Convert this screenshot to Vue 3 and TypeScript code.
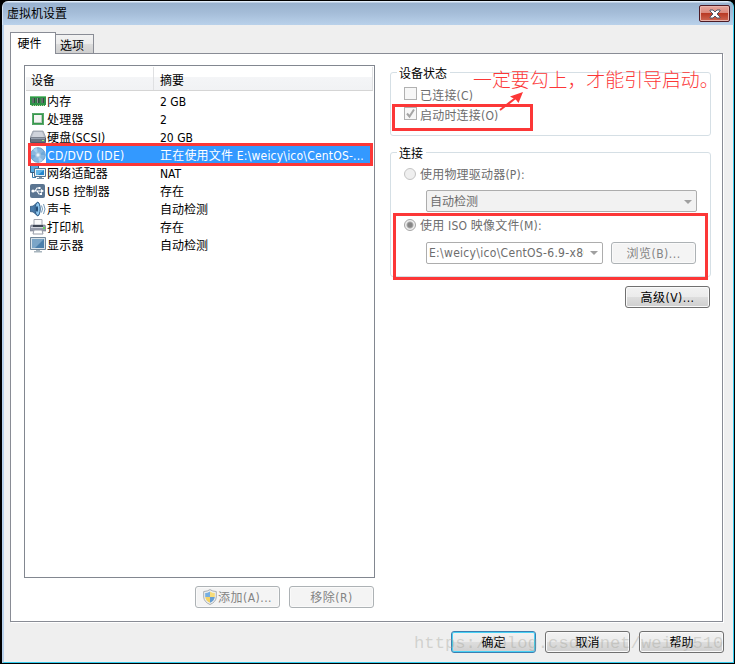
<script setup lang="ts">
import { ref } from 'vue'

interface Device {
  icon: string
  name: string
  summary: string
}

const devices: Device[] = [
  { icon: 'memory', name: '内存', summary: '2 GB' },
  { icon: 'cpu', name: '处理器', summary: '2' },
  { icon: 'disk', name: '硬盘(SCSI)', summary: '20 GB' },
  { icon: 'cd', name: 'CD/DVD (IDE)', summary: '正在使用文件 E:\\weicy\\ico\\CentOS-...' },
  { icon: 'network', name: '网络适配器', summary: 'NAT' },
  { icon: 'usb', name: 'USB 控制器', summary: '存在' },
  { icon: 'sound', name: '声卡', summary: '自动检测' },
  { icon: 'printer', name: '打印机', summary: '存在' },
  { icon: 'display', name: '显示器', summary: '自动检测' },
]

const selected = ref(3)
</script>

<template>
  <div class="window">
    <header class="titlebar">
      <h1>虚拟机设置</h1>
      <button class="close" aria-label="关闭">
        <svg width="12" height="10" viewBox="0 0 12 10">
          <path d="M1 1h3l2 2 2-2h3v1L8 5l3 3v1H8L6 7 4 9H1V8l3-3-3-3z" fill="#fff" stroke="#525866" stroke-width="1" />
        </svg>
      </button>
    </header>

    <div class="body">
      <nav class="tabs">
        <button class="tab active">硬件</button>
        <button class="tab">选项</button>
      </nav>

      <main class="panel">
        <section class="left">
          <div class="list">
            <div class="list-head">
              <span class="c-name">设备</span>
              <span class="c-sum">摘要</span>
            </div>
            <div
              v-for="(d, i) in devices"
              :key="d.name"
              class="row"
              :class="{ sel: i === selected }"
              @click="selected = i"
            >
              <svg class="icon" width="16" height="16" viewBox="0 0 16 16">
                <g v-if="d.icon === 'memory'">
                  <path d="M0 3h16v9h-1v1H1v-1H0z" fill="#2f9448" />
                  <path d="M0 3.5h16" stroke="#71c47e" />
                  <path d="M2 5h3v5H2zM6.5 5h3v5h-3zM11 5h3v5h-3z" fill="#344b43" />
                  <path d="M3 5v5M7.5 5v5M12 5v5" stroke="#8b9d90" />
                  <path d="M1 12.5h14" stroke="#b9d8a1" stroke-dasharray="1 1" />
                </g>
                <g v-else-if="d.icon === 'cpu'">
                  <path d="M2 2h12v12H2z" fill="#36984d" />
                  <path d="M2.5 2.5h11v11h-11z" fill="none" stroke="#5aa86a" />
                  <path d="M4 4h8v8H4z" fill="#f3f4f2" />
                  <path d="M11.5 4v8M4 11.5h8" stroke="#bfcac0" />
                </g>
                <g v-else-if="d.icon === 'disk'">
                  <path d="M3 2h10l3 7H0z" fill="#b8bec8" stroke="#8b929e" stroke-width=".7" />
                  <path d="M4 3h8l2 5H2z" fill="#d0d4dc" />
                  <path d="M.5 9h15v4.5H.5z" fill="#6b7482" stroke="#505967" />
                  <path d="M1 9.5h14" stroke="#98a2b0" />
                  <path d="M12 11h2v1h-2z" fill="#8df06c" />
                </g>
                <g v-else-if="d.icon === 'cd'">
                  <circle cx="8" cy="8" r="7.3" fill="#86b7e0" stroke="#6f9fca" />
                  <path d="M8 8 3 2.5A7 7 0 0 1 7 1zM8 8l5 5.5A7 7 0 0 1 9 15z" fill="#a9cfee" />
                  <path d="M8 8 14 4a7 7 0 0 1 1 4zM8 8 2 12a7 7 0 0 1-1-4z" fill="#6fa8d8" />
                  <circle cx="8" cy="8" r="2.5" fill="#c9dff0" stroke="#9abfdd" />
                  <circle cx="8" cy="8" r="1" fill="#f4f9fc" />
                </g>
                <g v-else-if="d.icon === 'network'">
                  <path d="M.5 .5h8v7h-8z" fill="#57a9df" stroke="#315a80" />
                  <path d="M2.500 8v4.500H6" stroke="#397bab" fill="none" />
                  <path d="M4.5 3.5h11v8h-11z" fill="#e8f1f6" stroke="#54718c" />
                  <path d="M6 5h8v5H6z" fill="#2385cc" />
                  <path d="M6 5h8L8 10H6z" fill="#61b5e8" />
                  <path d="M9 12h3v1h2v1H7v-1h2z" fill="#7690a5" />
                </g>
                <g v-else-if="d.icon === 'usb'">
                  <rect x="0" y="1" width="15" height="14" rx="2" fill="#5b7591" />
                  <path d="M3 8h9M5 8l2-3h2M7 8l2 3h2" fill="none" stroke="#fff" stroke-width="1.1" />
                  <circle cx="3" cy="8" r="1.6" fill="#fff" />
                  <path d="M11 6l3 2-3 2zM8.5 4h2v2h-2zM10 10h2v2h-2z" fill="#fff" />
                </g>
                <g v-else-if="d.icon === 'sound'">
                  <path d="M0 5.5 3 5l5-4c2 3 2 11 0 14l-5-4-3-.5z" fill="#4a7ba9" stroke="#315578" stroke-width=".7" />
                  <ellipse cx="7.7" cy="8" rx="2.5" ry="6.7" fill="#8cc5ed" stroke="#2c5984" />
                  <ellipse cx="7" cy="8" rx="1.1" ry="3" fill="#244c75" />
                  <path d="M11.5 4.5q2 3.5 0 7M13.5 3q3 5 0 10" fill="none" stroke="#7499b9" />
                </g>
                <g v-else-if="d.icon === 'printer'">
                  <path d="M4 .5h8v6H4z" fill="#fafafa" stroke="#a1a4ad" />
                  <path d="M1 6h14l1 2v4H0V8z" fill="#969cab" stroke="#777e8e" stroke-width=".6" />
                  <path d="M3 6h10v2H3z" fill="#3f4654" />
                  <path d="M1 8.5h14" stroke="#d2d5de" />
                  <path d="M4 11h8l1 4H3z" fill="#fff" stroke="#9499a5" />
                  <path d="M13 8h2v2h-2z" fill="#62d65b" />
                </g>
                <g v-else>
                  <path d="M.5 .5h15v12H.5z" fill="#d8e2e9" stroke="#71869a" />
                  <path d="M2 2h12v9H2z" fill="#4b7fac" />
                  <path d="M2 2h12L5 11H2z" fill="#7ba5c7" />
                  <path d="M6 13h4v1h2v1.5H4V14h2z" fill="#a8b5be" />
                </g>
              </svg>
              <div class="cells">
                <span class="name">{{ d.name }}</span>
                <span class="sum">{{ d.summary }}</span>
              </div>
            </div>
          </div>
          <div class="list-actions">
            <button class="btn disabled">
              <svg class="shield" width="14" height="16" viewBox="0 0 14 16">
                <path d="M7 .6Q9.500 2.500 13.300 2.500V8Q13 13 7 15.500Q1 13 .7 8V2.500Q4.500 2.500 7 .6z" fill="#eef0f0" stroke="#a8adb1" />
                <path d="M7 2.500Q4.500 4 2.200 4V8H7z" fill="#76aee0" />
                <path d="M7 2.500Q9.500 4 11.800 4V8H7z" fill="#f7dc78" />
                <path d="M2.200 8H7v5.800Q2.700 12 2.200 8z" fill="#f3d264" />
                <path d="M11.800 8H7v5.800Q11.300 12 11.800 8z" fill="#659dd3" />
              </svg>添加(A)...
            </button>
            <button class="btn disabled">移除(R)</button>
          </div>
        </section>

        <section class="right">
          <div class="group status">
            <h2>设备状态</h2>
            <label class="option"><span class="check"></span>已连接(C)</label>
            <label class="option"><span class="check">
              <svg width="11" height="11" viewBox="0 0 11 11"><path d="M2 5.500 4.500 8.500 9 1.500" fill="none" stroke="#a5a5a5" stroke-width="2" /></svg>
            </span>启动时连接(O)</label>
          </div>
          <div class="group connection">
            <h2>连接</h2>
            <label class="option"><span class="radio"></span>使用物理驱动器(P):</label>
            <div class="combo physical"><span>自动检测</span><i></i></div>
            <label class="option iso"><span class="radio on"></span>使用 ISO 映像文件(M):</label>
            <div class="file-row">
              <div class="combo file"><span>E:\weicy\ico\CentOS-6.9-x86</span><i></i></div>
              <button class="btn disabled">浏览(B)...</button>
            </div>
          </div>
          <button class="btn advanced">高级(V)...</button>
        </section>
      </main>

      <footer class="footer">
        <button class="btn primary">确定</button>
        <button class="btn">取消</button>
        <button class="btn">帮助</button>
      </footer>
    </div>

    <div class="mark mark-row"></div>
    <div class="mark mark-check"></div>
    <div class="mark mark-iso"></div>
    <svg class="arrow" width="28" height="22" viewBox="0 0 28 22">
      <path d="M2 20 17 8.500" stroke="#fc3737" stroke-width="2" />
      <path d="M25 2 20.500 13 18 9.800 12 6.500z" fill="#fc3737" />
    </svg>
    <p class="note">一定要勾上，才能引导启动。</p>
    <p class="watermark">https://blog.csdn.net/weicy510</p>
  </div>
</template>

<style>
body {
  margin: 0;
  background: #000;
  overflow: hidden;
}
</style>

<style scoped>
* {
  box-sizing: border-box;
}
.window {
  position: relative;
  display: flex;
  flex-direction: column;
  width: 735px;
  height: 664px;
  padding: 1px 1px 1px 2px;
  background: #000;
  border-radius: 7px 7px 0 0;
  font-family: 'DejaVu Sans Condensed', 'Noto Sans CJK SC', sans-serif;
  font-size: 12px;
  line-height: 18px;
  color: #000;
  overflow: hidden;
}
.titlebar {
  flex: none;
  display: flex;
  justify-content: space-between;
  height: 24px;
  padding: 4px 3px 0 4px;
  background: linear-gradient(#e1edfa 0, #e1edfa 1px, #99b2cf 2px, #a5bdd8 50%, #b9d1ea);
  border-left: 1px solid #d3e4f6;
  border-right: 1px solid #54d4ef;
  border-radius: 6px 6px 0 0;
}
h1,
h2,
p {
  margin: 0;
  font-size: 12px;
  font-weight: 400;
}
button {
  padding: 0;
  font: inherit;
  color: inherit;
}
.close {
  display: flex;
  align-items: center;
  justify-content: center;
  width: 31px;
  height: 17px;
  border: 1px solid #4d1b25;
  border-radius: 2px;
  background: linear-gradient(#e7a69d, #d98679 48%, #b93a24 50%, #cd6753);
  box-shadow: inset 0 0 0 1px #e9b4ac;
}
.body {
  flex: 1;
  display: flex;
  flex-direction: column;
  padding: 7px 10px 0 6px;
  background: #efefef;
  border: solid;
  border-width: 0 1px 1px 2px;
  border-color: #efefef #35cbed #35cbed #b9d1ea;
}
.tabs {
  flex: none;
  display: flex;
  align-items: flex-end;
  height: 21px;
}
.tab {
  width: 38px;
  height: 19px;
  padding: 2px 5px 0 0;
  border: 1px solid #898c95;
  border-left: 0;
  border-bottom: 0;
  background: linear-gradient(#f2f2f2, #ebebeb 50%, #dcdcdc 52%, #cfcfcf);
}
.tab.active {
  position: relative;
  z-index: 1;
  width: 46px;
  height: 22px;
  margin-bottom: -1px;
  padding: 0 7px 0 0;
  border-left: 1px solid #898c95;
  background: #fff;
}
.panel {
  flex: none;
  display: flex;
  gap: 15px;
  width: 713px;
  height: 569px;
  padding: 11px 11px 0 13px;
  border: 1px solid #898c95;
  background: #fff;
  box-shadow: 1px 1px 0 #fff;
}
.left {
  width: 351px;
}
.list {
  height: 513px;
  border: 1px solid #828790;
  padding: 1px;
}
.list-head {
  display: flex;
  height: 24px;
  margin-bottom: 1px;
  line-height: 28px;
  border-bottom: 1px solid #d5d5d5;
  background: linear-gradient(#fff 42%, #f4f5f7 43%, #f1f2f4);
}
.c-name {
  width: 128px;
  padding-left: 5px;
  border-right: 1px solid #dfe0e2;
}
.c-sum {
  flex: 1;
  padding-left: 6px;
  border-right: 1px solid #dfe0e2;
}
.row {
  display: flex;
  align-items: center;
  height: 18px;
  padding-left: 4px;
  white-space: nowrap;
}
.icon {
  flex: none;
}
.cells {
  display: flex;
  flex: 1;
  height: 18px;
  padding: 1px 0 0 1px;
}
.name {
  width: 113px;
  letter-spacing: 0.2px;
}
.row.sel .cells {
  background: #3399ff;
  color: #fff;
}
.row.sel .name {
  letter-spacing: 0.35px;
}
.row.sel .sum {
  letter-spacing: 0.2px;
}
.list-actions {
  display: flex;
  gap: 9px;
  justify-content: flex-end;
  padding: 8px 1px 0 0;
}
.btn {
  display: flex;
  align-items: center;
  justify-content: center;
  width: 85px;
  height: 22px;
  padding-top: 2px;
  border: 1px solid #707070;
  border-radius: 3px;
  background: linear-gradient(#f2f2f2, #ebebeb 50%, #dddddd 52%, #cfcfcf);
  box-shadow: inset 0 0 0 1px #fafafa;
  letter-spacing: 0.5px;
}
.btn.disabled {
  border-color: #adb2b5;
  background: #f4f4f4;
  color: #838383;
}
.shield {
  margin: -2px 1px 0 0;
}
.btn.primary {
  border-color: #3c7fb1;
  box-shadow: inset 0 0 0 1px #48d1f5;
}
.right {
  width: 321px;
  padding-top: 7px;
}
.group {
  border: 1px solid #d5dfe5;
  border-radius: 3px;
}
.group h2 {
  width: fit-content;
  height: 18px;
  margin: -8px 0 0 6px;
  padding: 0 3px 0 2px;
  background: #fff;
}
.status {
  height: 64px;
}
.option {
  display: flex;
  align-items: center;
  height: 20px;
  padding-left: 13px;
  color: #6d6d6d;
  letter-spacing: 0.2px;
}
.status .option {
  margin-top: 3px;
}
.status .option + .option {
  margin-top: 0;
}
.check {
  flex: none;
  width: 13px;
  height: 13px;
  margin: -5px 3px 0 0;
  border: 1px solid #b1b1b1;
  background: #f7f7f7;
}
.check svg {
  display: block;
}
.radio {
  flex: none;
  width: 12px;
  height: 12px;
  margin: -3px 4px 0 0;
  border: 1px solid #c4c4c4;
  border-radius: 50%;
  background: #efefef;
}
.radio.on {
  border-color: #a5a5a5;
  background: radial-gradient(circle, #858585 0 2px, #aaa 3px, #eee 4px);
}
.connection {
  height: 125px;
  margin-top: 16px;
}
.connection .option {
  margin-top: 2px;
}
.combo {
  display: flex;
  align-items: center;
  justify-content: space-between;
  height: 22px;
  padding: 2px 4px 0 3px;
  border: 1px solid #adadad;
  border-radius: 2px;
  background: #fff;
  color: #6d6d6d;
}
.combo span {
  overflow: hidden;
  white-space: nowrap;
}
.combo i {
  flex: none;
  border: solid transparent;
  border-width: 4px 4px 0;
  border-top-color: #a0a0a0;
}
.physical {
  width: 271px;
  margin: 5px 0 0 35px;
  background: #f2f2f2;
}
.connection .iso {
  margin-top: 4px;
}
.file-row {
  display: flex;
  gap: 8px;
  margin: 6px 0 0 35px;
}
.file {
  width: 177px;
  padding: 0 4px 0 2px;
}
.file span {
  width: 155px;
  letter-spacing: 0.3px;
}
.advanced {
  margin: 9px 1px 0 auto;
}
.footer {
  display: flex;
  gap: 9px;
  justify-content: flex-end;
  padding: 9px 0 0;
  margin-right: -1px;
}
.footer .btn {
  letter-spacing: 0;
}
.mark {
  position: absolute;
  border: 3px solid #fc3737;
  pointer-events: none;
}
.mark-row {
  left: 28px;
  top: 143px;
  width: 345px;
  height: 23px;
}
.mark-check {
  left: 392px;
  top: 104px;
  width: 141px;
  height: 27px;
}
.mark-iso {
  left: 393px;
  top: 213px;
  width: 315px;
  height: 67px;
}
.arrow {
  position: absolute;
  left: 498px;
  top: 90px;
}
.note {
  position: absolute;
  left: 473px;
  top: 66px;
  font-family: 'Noto Sans CJK SC', sans-serif;
  font-size: 18.9px;
  font-weight: 300;
  line-height: 26px;
  color: #fc3737;
  white-space: nowrap;
}
.watermark {
  position: absolute;
  left: 414px;
  top: 634px;
  font-family: 'Liberation Mono', monospace;
  font-size: 17.2px;
  line-height: 20px;
  color: rgba(160, 160, 150, 0.38);
  white-space: nowrap;
  pointer-events: none;
}
</style>
